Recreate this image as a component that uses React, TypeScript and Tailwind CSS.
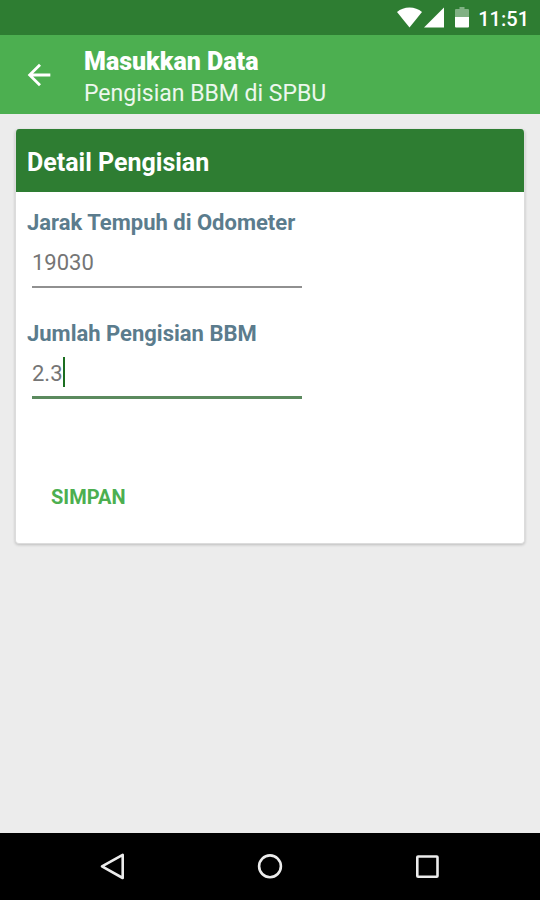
import React, { useState } from 'react';

const StatusBar: React.FC = () => (
    <div className="h-[35px] bg-[#2e7d32] flex items-center justify-end pr-[11px] text-white">
        <svg className="w-[25px] h-[21px]" viewBox="0 0 25 21" fill="currentColor" aria-hidden="true">
            <path d="M12.5 20.5 0 5C3.400 2.200 7.700.6 12.500.6S21.600 2.200 25 5z" />
        </svg>
        <svg className="w-[20px] h-[21px] ml-0.5" viewBox="0 0 20 21" fill="currentColor" aria-hidden="true">
            <path d="M20 .5v20H0z" />
        </svg>
        <svg className="w-[14px] h-[21px] ml-[11px]" viewBox="0 0 14 21" fill="currentColor" aria-hidden="true">
            <path d="M4.500 0h5v2H13q1 0 1 1v7H0V3q0-1 1-1h3.500z" fillOpacity="0.4" />
            <path d="M0 10h14v9.500q0 1-1 1H1q-1 0-1-1z" />
        </svg>
        <span className="pt-[2px] ml-[9px] text-[20px] leading-6 font-medium">11:51</span>
    </div>
);

const AppBar: React.FC = () => (
    <header className="h-[79px] bg-[#4caf50] flex items-center pl-[22px] text-white">
        <button type="button" aria-label="Kembali">
            <svg className="w-[34px] h-[34px]" viewBox="0 0 24 24" fill="currentColor" aria-hidden="true">
                <path d="M20 11H7.830l5.590-5.590L12 4l-8 8 8 8 1.410-1.410L7.830 13H20v-2z" />
            </svg>
        </button>
        <div className="ml-7 pt-[6px]">
            <h1 className="text-[25px] leading-8 font-black">Masukkan Data</h1>
            <p className="text-[23px] leading-8 text-white/90">Pengisian BBM di SPBU</p>
        </div>
    </header>
);

interface FieldProps {
    id: string;
    label: string;
    value: string;
    onChange: (value: string) => void;
    active?: boolean;
}

const Field: React.FC<FieldProps> = ({ id, label, value, onChange, active }) => (
    <div className="h-[111px]">
        <label htmlFor={id} className="block text-[22px] leading-8 font-bold text-[#5b7c8d]">{label}</label>
        <div className="relative ml-[5px] w-[270px]">
            <input
                id={id}
                type="text"
                inputMode="decimal"
                value={value}
                onChange={e => onChange(e.target.value)}
                className={`block w-full h-[49px] text-[22px] text-[#757575] caret-transparent outline-none ${
                    active ? 'border-b-[3px] border-[#5b8a5e]' : 'border-b-2 border-[#909090]'
                }`}
            />
            {active && (
                <span className="absolute top-[7px] left-0 h-[30px] flex text-[22px] pointer-events-none" aria-hidden="true">
                    <span className="invisible">{value}</span>
                    <span className="w-[2px] bg-[#1b6e20]" />
                </span>
            )}
        </div>
    </div>
);

const NavBar: React.FC = () => (
    <nav className="h-[67px] bg-black px-[34px] grid grid-cols-3 items-center justify-items-center">
        <button type="button" aria-label="Back">
            <svg className="w-[28px] h-[28px]" viewBox="0 0 28 28" fill="none" stroke="#ececec" strokeWidth="2.600" strokeLinejoin="round">
                <path d="M23.700 1.800v23.200L3 13.400z" />
            </svg>
        </button>
        <button type="button" aria-label="Home">
            <svg className="w-[28px] h-[28px]" viewBox="0 0 28 28" fill="none" stroke="#ececec" strokeWidth="2.600">
                <circle cx="14" cy="13.300" r="10.900" />
            </svg>
        </button>
        <button type="button" aria-label="Recents">
            <svg className="w-[28px] h-[28px]" viewBox="0 0 28 28" fill="none" stroke="#ececec" strokeWidth="2.600">
                <rect x="4.300" y="3.500" width="20.200" height="20.200" rx="0.800" />
            </svg>
        </button>
    </nav>
);

export default function App() {
    const [odometer, setOdometer] = useState('19030');
    const [jumlah, setJumlah] = useState('2.3');

    return (
        <div className="min-h-screen flex flex-col bg-[#ececec] font-[Roboto,sans-serif]">
            <StatusBar />
            <AppBar />
            <main className="flex-1 px-[15px] pt-[15px]">
                <form
                    onSubmit={e => e.preventDefault()}
                    className="bg-white border border-[#dcdcdc] border-t-0 rounded-[4px] overflow-hidden shadow-[0_1px_3px_rgba(0,0,0,0.2)]"
                >
                    <h2 className="h-[63px] px-[11px] pt-1 bg-[#2e7d32] flex items-center text-[25px] leading-8 font-bold text-white">
                        Detail Pengisian
                    </h2>
                    <div className="px-[11px] pt-[15px] pb-[22px]">
                        <Field id="odometer" label="Jarak Tempuh di Odometer" value={odometer} onChange={setOdometer} />
                        <Field id="jumlah" label="Jumlah Pengisian BBM" value={jumlah} onChange={setJumlah} active />
                        <button type="submit" className="mt-11 h-12 px-6 text-[20px] font-bold text-[#4caf50]">
                            SIMPAN
                        </button>
                    </div>
                </form>
            </main>
            <NavBar />
        </div>
    );
}
